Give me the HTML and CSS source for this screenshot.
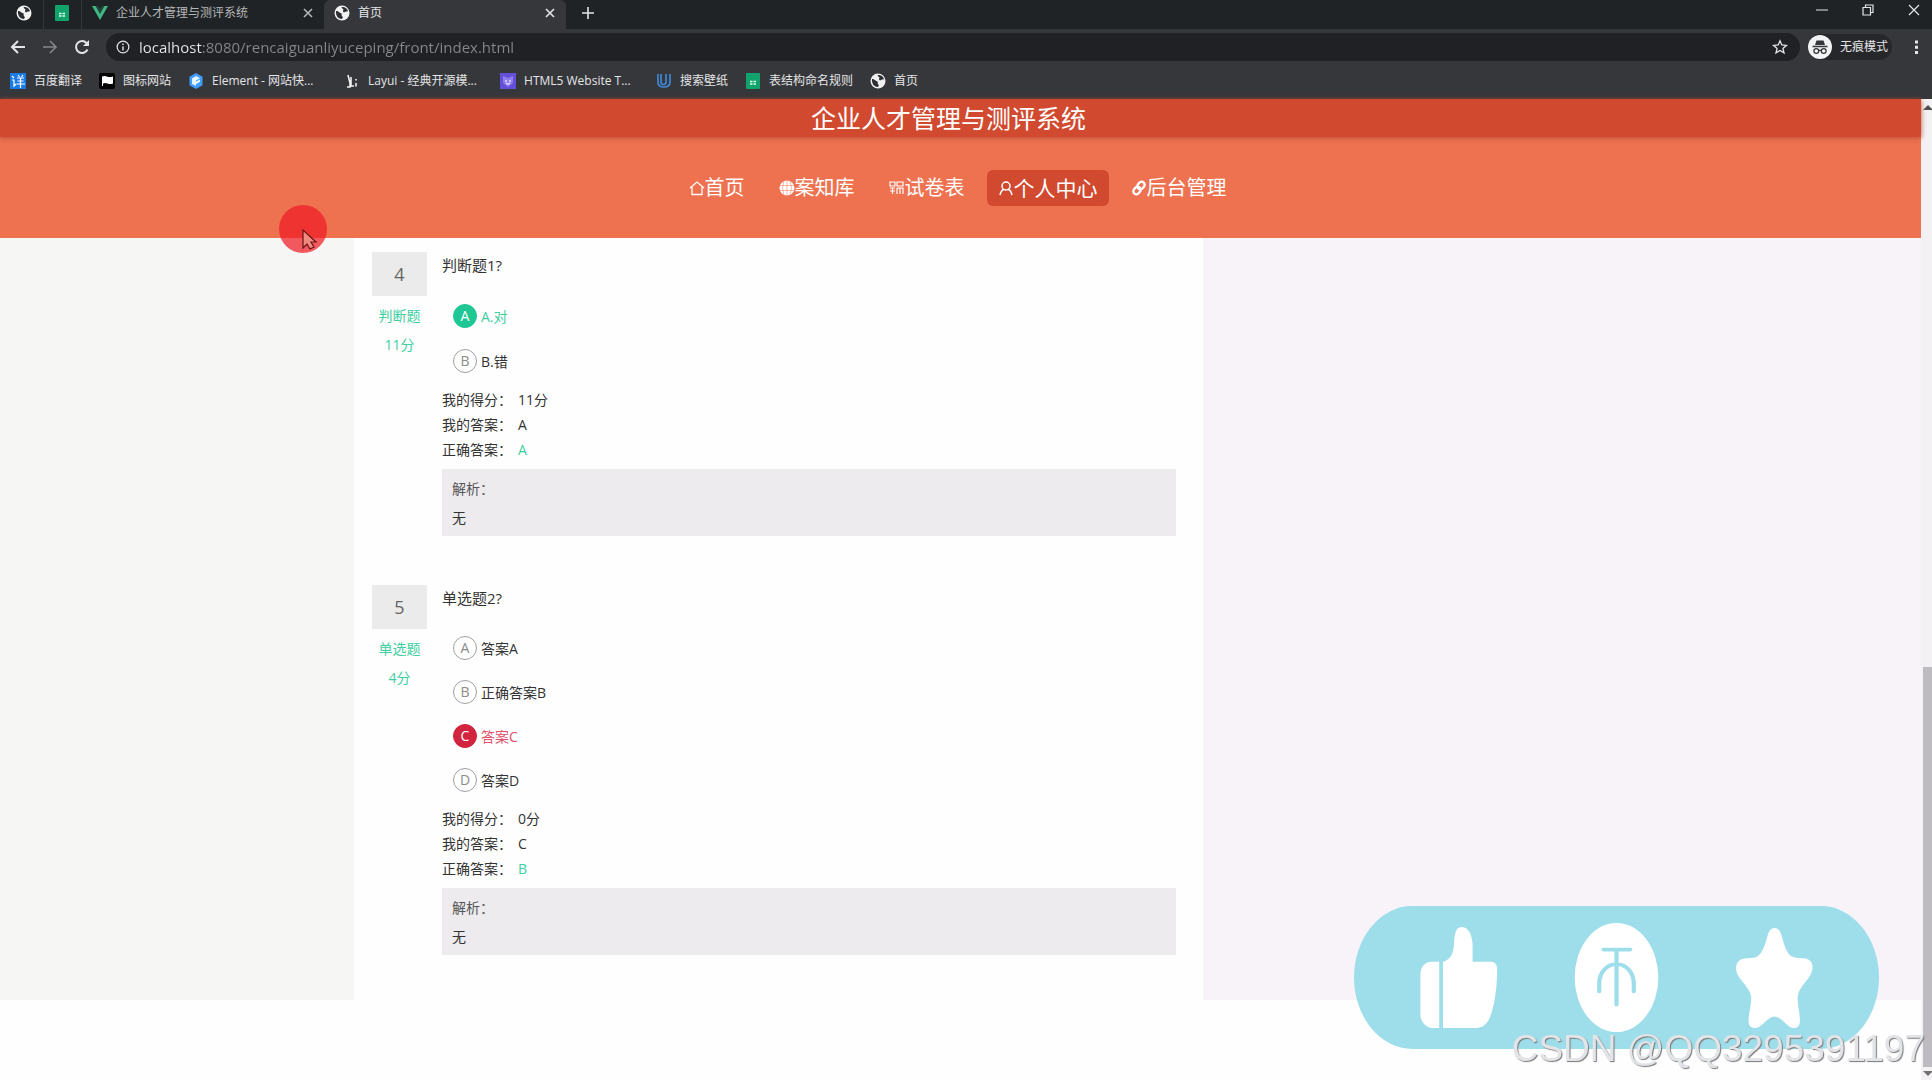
FILE: index.html
```html
<!DOCTYPE html>
<html lang="zh-CN">
<head>
<meta charset="utf-8">
<title>首页</title>
<link rel="stylesheet" href="styles.css">
</head>
<body>
<svg class="sprite" width="0" height="0" aria-hidden="true">
  <symbol id="globe" viewBox="0 0 16 16"><circle cx="8" cy="8" r="7.500" fill="#f1f1f1"/><path d="M2 6c3 0 3 2 5 2 1.500 1 0 2 1 3s1 1.500 0 3C4.500 14 1.500 11 2 6zM8 2c2-.5 5 1 6 4-1 1-2 0-3 1s-2 0-2-1 1-1 0-2-2-1-1-2z" fill="#2c2e33"/></symbol>
  <symbol id="sheet" viewBox="0 0 16 16"><rect x="1" width="14" height="16" rx="1" fill="#12a36c"/><path d="M5 8.500h2.500M8.500 8.500H11M5 11h2.500M8.500 11H11" stroke="#d9fff0" stroke-width="1.500"/></symbol>
  <symbol id="cross" viewBox="0 0 12 12"><path d="M2 2l8 8M10 2l-8 8" stroke="currentColor" stroke-width="1.600" fill="none"/></symbol>
</svg>

<header class="browser">
  <div class="tabs">
    <button class="tab tab-pinned" aria-label="首页"><svg class="icon"><use href="#globe"/></svg></button>
    <button class="tab tab-pinned" aria-label="表结构命名规则"><svg class="icon"><use href="#sheet"/></svg></button>
    <div class="tab tab-wide">
      <svg class="icon" viewBox="0 0 16 16"><path d="M0 1h4l4 7 4-7h4L8 15z" fill="#41b883"/><path d="M3.500 1H6l2 3.500L10 1h2.500L8 9z" fill="#25463d"/></svg>
      <span class="tab-title">企业人才管理与测评系统</span>
      <button class="plain" aria-label="关闭"><svg class="icon-small"><use href="#cross"/></svg></button>
    </div>
    <div class="tab tab-wide tab-active">
      <svg class="icon"><use href="#globe"/></svg>
      <span class="tab-title">首页</span>
      <button class="plain" aria-label="关闭"><svg class="icon-small"><use href="#cross"/></svg></button>
    </div>
    <button class="plain new-tab" aria-label="新标签页"><svg class="icon-small" viewBox="0 0 12 12"><path d="M6 0v12M0 6h12" stroke="currentColor" stroke-width="1.600"/></svg></button>
    <div class="window-buttons">
      <button class="plain" aria-label="最小化"><svg class="icon-small" viewBox="0 0 12 12"><path d="M0 6h12" stroke="currentColor"/></svg></button>
      <button class="plain" aria-label="还原"><svg class="icon-small" viewBox="0 0 12 12"><path d="M1 3.500h7.500V11H1zM3.500 3V1H11v7.500H9" stroke="currentColor" stroke-width="1.200" fill="none"/></svg></button>
      <button class="plain" aria-label="关闭窗口"><svg class="icon-small" viewBox="0 0 12 12"><path d="M1 1l10 10M11 1L1 11" stroke="currentColor" stroke-width="1.200"/></svg></button>
    </div>
  </div>

  <div class="toolbar">
    <button class="plain" aria-label="后退"><svg class="icon" viewBox="0 0 16 16"><path d="M15 8H2M8 2L2 8l6 6" stroke="currentColor" stroke-width="2" fill="none"/></svg></button>
    <button class="plain dim" aria-label="前进"><svg class="icon" viewBox="0 0 16 16"><path d="M1 8h13M8 2l6 6-6 6" stroke="currentColor" stroke-width="1.600" fill="none"/></svg></button>
    <button class="plain" aria-label="刷新"><svg class="icon" viewBox="0 0 16 16"><path d="M13.500 10.500A6 6 0 1 1 12.500 4" stroke="currentColor" stroke-width="2" fill="none"/><path d="M15 1v6H9z" fill="currentColor"/></svg></button>
    <div class="address">
      <svg class="icon-info" viewBox="0 0 16 16"><circle cx="8" cy="8" r="6.700" stroke="currentColor" stroke-width="1.400" fill="none"/><path d="M8 7v5M8 4v1.600" stroke="currentColor" stroke-width="1.600"/></svg>
      <input class="url" type="text" aria-label="地址" value="localhost:8080/rencaiguanliyuceping/front/index.html">
      <button class="plain" aria-label="收藏"><svg class="icon" viewBox="0 0 16 16"><path d="M8 1.800l1.800 4.200 4.600.4-3.500 3 1.100 4.500L8 11.500l-4 2.400 1.100-4.500-3.500-3L6.200 6z" stroke="currentColor" stroke-width="1.300" fill="none"/></svg></button>
    </div>
    <div class="incognito">
      <svg class="icon-incognito" viewBox="0 0 24 24"><circle cx="12" cy="12" r="12" fill="#f1f3f4"/><path d="M8.500 5.500h7l1.500 4.500H7zM4.500 10.800h15v1.500h-15z" fill="#35363a"/><g fill="none" stroke="#35363a" stroke-width="1.300"><circle cx="8.300" cy="16" r="2.400"/><circle cx="15.700" cy="16" r="2.400"/><path d="M10.700 15.600q1.300-.8 2.600 0"/></g></svg>
      <span>无痕模式</span>
    </div>
    <button class="plain" aria-label="菜单"><svg class="icon" viewBox="0 0 16 16"><path d="M7 1.500h3v3H7zM7 6.800h3v3H7zM7 12h3v3H7z" fill="currentColor"/></svg></button>
  </div>

  <nav class="bookmarks" aria-label="书签">
    <a href="#"><svg class="icon" viewBox="0 0 16 16"><rect width="16" height="16" fill="#1b7be5"/><path d="M2 3l2 2M2 7h2v6l2-2M8 2l1.500 2M13 2l-1.500 2M7 5h7M7.500 8h6M6.500 11H15M10.500 5v10" stroke="#fff" stroke-width="1.200" fill="none"/></svg>百度翻译</a>
    <a href="#"><svg class="icon" viewBox="0 0 16 16"><rect width="16" height="16" rx="2" fill="#050505"/><path d="M3 3.500q3-1 5 0t6 0v7q-3 1-5.500 0T4 10.500V13H3z" fill="#fff"/></svg>图标网站</a>
    <a class="long" href="#"><svg class="icon" viewBox="0 0 16 16"><path d="M8 0l6.500 3.800v8.400L8 16l-6.500-3.800V3.800z" fill="#409eff"/><path d="M4 5.500L8 3l4 2.200-4 2.400v1l4-2v2.200l-4 2.400v1.500L4 11z" fill="#e6f4ff"/></svg>Element - 网站快...</a>
    <a class="long" href="#"><svg class="icon" viewBox="0 0 16 16"><path d="M4 2l2 8v4H3M7 4v9h3M12 6v1.500M12 10v3.500" stroke="#f0f0f0" stroke-width="1.600" fill="none"/></svg>Layui - 经典开源模...</a>
    <a class="long" href="#"><svg class="icon" viewBox="0 0 16 16"><rect width="16" height="16" fill="#6450d8"/><path d="M3 3l5 2 5-2v7l-5 4-5-4z" fill="#8f7df0"/><path d="M5 8h2M9 8h2M6 10q2 2 4 0" stroke="#e0d8ff" stroke-width="1.300" fill="none"/></svg>HTML5 Website T...</a>
    <a href="#"><svg class="icon" viewBox="0 0 16 16"><path d="M2 1v8q0 5 6 5t6-5V1M5 1v8q0 2.500 2.500 2.500T10 9V1" stroke="#3f8be0" stroke-width="1.600" fill="none"/></svg>搜索壁纸</a>
    <a href="#"><svg class="icon"><use href="#sheet"/></svg>表结构命名规则</a>
    <a href="#"><svg class="icon"><use href="#globe"/></svg>首页</a>
  </nav>
</header>

<div class="viewport">
  <div class="site">
    <header class="site-header">
      <h1>企业人才管理与测评系统</h1>
      <nav class="site-nav">
        <a href="#"><svg class="nav-icon" viewBox="0 0 16 16"><path d="M1 8l7-6 7 6M3 7v7.500h10V7" stroke="currentColor" stroke-width="1.300" fill="none"/></svg>首页</a>
        <a href="#"><svg class="nav-icon" viewBox="0 0 16 16"><circle cx="8" cy="8" r="7.500" fill="currentColor"/><path d="M1 5.500h14M1 10.500h14M8 0v16M5 1q-3 7 0 14M11 1q3 7 0 14" stroke="#ee7150" stroke-width=".5" fill="none"/></svg>案知库</a>
        <a href="#"><svg class="nav-icon" viewBox="0 0 16 16"><path d="M1 2h5v4H1zM8 2h6v4H8zM1 8h5M3.500 8v6M1 11h5M8 8h6v6M11 8v6M8 8v6" stroke="currentColor" stroke-width="1.200" fill="none"/></svg>试卷表</a>
        <a class="current" href="#"><svg class="nav-icon" viewBox="0 0 16 16"><circle cx="8" cy="6" r="4" stroke="currentColor" stroke-width="1.500" fill="none"/><path d="M2 15q1-5 4-5.500M14 15q-1-5-4-5.500" stroke="currentColor" stroke-width="1.500" fill="none"/></svg>个人中心</a>
        <a href="#"><svg class="nav-icon" viewBox="0 0 16 16"><g fill="none" stroke="currentColor" stroke-width="2.400"><rect x="7" y="1.500" width="6" height="8" rx="3" transform="rotate(40 10 5.500)"/><rect x="3" y="6.500" width="6" height="8" rx="3" transform="rotate(40 6 10.500)"/></g></svg>后台管理</a>
      </nav>
    </header>

    <div class="page">
      <main class="paper">
        <article class="question">
          <aside class="meta"><div class="number">4</div><p>判断题</p><p>11分</p></aside>
          <div class="detail">
            <h2>判断题1?</h2>
            <ul class="options">
              <li class="correct"><span class="badge">A</span>A.对</li>
              <li><span class="badge">B</span>B.错</li>
            </ul>
            <dl class="result">
              <dt>我的得分：</dt><dd>11分</dd>
              <dt>我的答案：</dt><dd>A</dd>
              <dt>正确答案：</dt><dd class="answer">A</dd>
            </dl>
            <section class="analysis"><p class="label">解析：</p><p>无</p></section>
          </div>
        </article>

        <article class="question">
          <aside class="meta"><div class="number">5</div><p>单选题</p><p>4分</p></aside>
          <div class="detail">
            <h2>单选题2?</h2>
            <ul class="options">
              <li><span class="badge">A</span>答案A</li>
              <li><span class="badge">B</span>正确答案B</li>
              <li class="wrong"><span class="badge">C</span>答案C</li>
              <li><span class="badge">D</span>答案D</li>
            </ul>
            <dl class="result">
              <dt>我的得分：</dt><dd>0分</dd>
              <dt>我的答案：</dt><dd>C</dd>
              <dt>正确答案：</dt><dd class="answer">B</dd>
            </dl>
            <section class="analysis"><p class="label">解析：</p><p>无</p></section>
          </div>
        </article>
      </main>
    </div>
  </div>
  <div class="scrollbar" aria-hidden="true">
    <span class="arrow up"></span><span class="thumb"></span><span class="arrow down"></span>
  </div>
</div>

<svg class="pointer" viewBox="0 0 48 48" aria-hidden="true"><circle cx="24" cy="24" r="24" fill="#ee1c25" fill-opacity=".72"/><path d="M24 25v18l4-4 3 5 4-2-3-5h5z" fill="#f08a80" stroke="#6b1414" stroke-width="1.200"/></svg>

<svg class="reactions" viewBox="0 0 1368 430" preserveAspectRatio="none" role="img" aria-label="点赞 投币 收藏">
  <rect width="1368" height="430" rx="152" ry="215" fill="#9edeeb"/>
  <g transform="translate(-62 -77)" fill="#fff">
    <path d="M284 245v199h-20c-14-2-26-16-29-36V284c0-24 12-38 28-39z"/>
    <path d="M294 444V245c18-8 25-20 28-45 2-32 2-60 21-60 18 0 28 28 28 55v50h46c12 0 18 8 18 22 0 50-6 100-15 132-7 28-18 43-38 45z"/>
    <ellipse cx="746" cy="292" rx="109" ry="164"/>
    <path d="M712 208h70M746 208v166M701 334v-24c0-34 20-58 45-58s45 24 45 58v24" fill="none" stroke="#9edeeb" stroke-width="11" stroke-linecap="round"/>
    <path d="M1158 143c10 0 15 10 18 22 8 36 16 62 32 66 8 3 25 2 35 5 14 6 17 25 11 42-6 20-34 45-36 72-1 22 6 48 6 72 0 18-10 25-21 21-16-7-28-34-45-34s-29 27-46 34c-12 4-22-4-22-20 0-24 8-48 7-72-2-27-31-52-37-72-5-17-2-36 12-42 10-4 26-2 35-5 16-5 25-31 33-67 3-12 8-22 18-22z"/>
  </g>
</svg>
<div class="watermark">CSDN @QQ3295391197</div>
</body>
</html>
```
FILE: styles.css
```css
* { box-sizing: border-box; }

body {
  margin: 0;
  min-height: 100vh;
  display: flex;
  flex-direction: column;
  background: #fefefe;
  color: #333;
  font: 14px/25px "Open Sans", "Noto Sans CJK SC", sans-serif;
}

h1, h2, p, ul, dl, dd { margin: 0; padding: 0; font-weight: 400; }
ul { list-style: none; }
a { color: inherit; text-decoration: none; }
svg { display: block; flex: none; }
.sprite { position: absolute; }
.icon { width: 16px; height: 16px; }
.icon-small { width: 12px; height: 12px; }

.plain {
  display: flex;
  padding: 0;
  border: 0;
  background: none;
  color: inherit;
}

/* Browser window */
.browser { background: #36373b; color: #e4e5e7; font-size: 12px; line-height: 16px; }

.tabs { display: flex; align-items: stretch; height: 29px; padding-left: 8px; background: #202325; }
.tab { display: flex; align-items: center; gap: 8px; padding: 0 10px 4px; color: #b4b7ba; }
.tab-pinned { width: 36px; border: 0; padding-left: 8px; background: none; border-right: 1px solid #34373a; }
.tab-pinned + .tab-pinned { width: 38px; padding-left: 10px; }
.tab-wide { width: 242px; }
.tab-active { background: #36373b; color: #e4e5e7; border-radius: 6px 6px 0 0; }
.tab-title { flex: 1; }
.new-tab { align-items: center; padding: 0 16px 4px; }
.window-buttons { display: flex; align-items: center; gap: 34px; margin-left: auto; padding: 0 12px 9px 0; }

.toolbar { display: flex; align-items: center; gap: 16px; height: 36px; padding: 0 8px 0 10px; }
.dim { color: #85868a; }
.address {
  flex: 1;
  display: flex;
  align-items: center;
  gap: 9px;
  height: 28px;
  padding: 0 12px 0 10px;
  border-radius: 14px;
  background: #202124;
}
.icon-info { width: 14px; height: 14px; }
.url {
  flex: 1;
  min-width: 0;
  padding: 0;
  border: 0;
  outline: 0;
  font: 15px/20px "Open Sans", sans-serif;
  color: transparent;
  background: linear-gradient(90deg, #e8eaed 63px, #85878b 63px) text;
}
.incognito { display: flex; align-items: center; gap: 8px; height: 26px; padding-right: 4px; margin-left: -8px; border-radius: 13px; background: #26272a; }
.icon-incognito { width: 24px; height: 24px; }

.bookmarks { display: flex; align-items: center; gap: 17px; height: 34px; padding: 0 10px 2px; }
.bookmarks a { display: flex; align-items: center; gap: 8px; white-space: nowrap; }
.bookmarks .long { width: 139px; }

/* Page inside the window */
.viewport { flex: 1; display: flex; }
.site { flex: 1; }
.site-header { position: relative; background: #ee7150; color: #fff; text-align: center; }
.site-header h1 {
  padding-right: 24px;
  font-size: 25px;
  line-height: 38px;
  background: #d14a30;
  box-shadow: 0 1px 5px #b8503a;
}
.site-nav { display: flex; justify-content: center; gap: 10px; padding: 33px 6px 32px 0; font-size: 20px; line-height: 36px; }
.site-nav a { display: flex; align-items: center; padding: 0 12px; border-radius: 6px; }
.site-nav .current { padding: 0 11px; background: #d14a30; font-size: 21px; }
.nav-icon { width: 16px; height: 16px; }

.page {
  display: grid;
  grid-template-columns: 354fr 849fr 718fr;
  background: linear-gradient(90deg, #f6f6f4 50%, #f7f3f9 50%);
}
.paper {
  grid-column: 2;
  display: flex;
  flex-direction: column;
  gap: 49px;
  padding: 14px 27px 45px 18px;
  background: #fefefe;
}
.question { display: grid; grid-template-columns: 55px 1fr; gap: 15px; }
.meta { color: #3fcfa0; text-align: center; line-height: 29px; }
.number { margin-bottom: 5px; background: #ebebeb; color: #666; font-size: 18px; line-height: 44px; }
.detail h2 { font-size: 15px; line-height: 26px; }

.options { padding: 15px 0 4px 11px; }
.options li { display: flex; align-items: center; gap: 4px; height: 44px; }
.badge {
  width: 24px;
  height: 24px;
  border: 1px solid #a0a0a0;
  border-radius: 50%;
  color: #8c8c8c;
  line-height: 22px;
  text-align: center;
}
.options .correct { height: 46px; color: #3fcfa0; }
.options .wrong { color: #e0526a; }
.correct .badge { border-color: #1fc795; background: #1fc795; color: #fff; }
.wrong .badge { border-color: #d3243f; background: #d3243f; color: #fff; }

.result { display: grid; grid-template-columns: 76px 1fr; margin-bottom: 7px; }
.answer { color: #3fcfa0; }
.analysis { padding: 5px 10px 4px; background: #eeebef; line-height: 29px; }
.analysis .label { color: #555; }

.scrollbar { display: flex; flex-direction: column; width: 11px; padding-left: 2px; background: #f3f1f4; }
.thumb { width: 100%; flex: 400; background: #bdbac0; }
.arrow { height: 0; border: 5px solid transparent; }
.up { flex: none; margin-top: 1px; margin-bottom: 557px; border-bottom-color: #505050; }
.down { margin: 4px 0 -1px; border-top-color: #707070; }

/* Recording overlays */
.pointer { position: absolute; left: 279px; top: 205px; width: 48px; height: 48px; }
.reactions { position: fixed; right: 53px; bottom: 31px; width: 525px; height: 143px; }
.watermark {
  position: fixed;
  right: 7px;
  bottom: 10px;
  color: #e2e4e8;
  font: 37px/42px "Liberation Sans", sans-serif;
  text-shadow: 1px 1px 1px #777;
}
```
